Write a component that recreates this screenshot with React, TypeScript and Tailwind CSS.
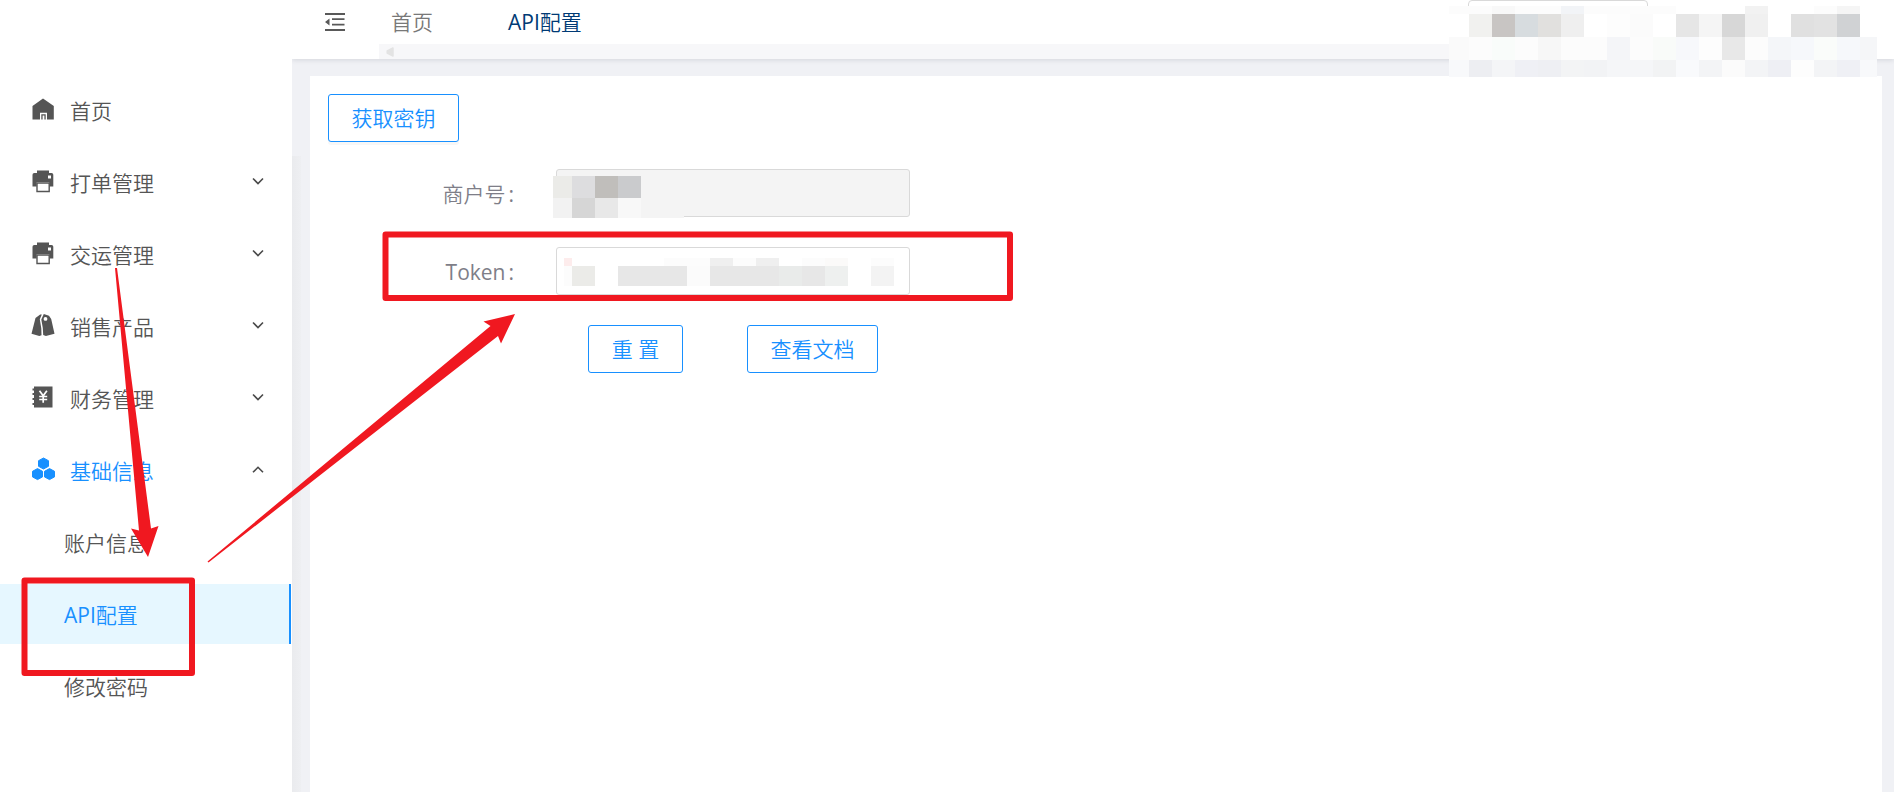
import React from "react";

const PrinterIcon = () => (
  <svg viewBox="0 0 24 24" className="h-6 w-6" fill="currentColor" aria-hidden="true">
    <path d="M6 1.500h12V4h2.500a1.800 1.800 0 0 1 1.800 1.800V17.500h-4V13H5.700v4.500H1.500V5.800A1.800 1.800 0 0 1 3.300 4H6zM17 6.500v3h3v-3z" fillRule="evenodd" />
    <path d="M6 14h12.200v8.500H6z" fill="#fff" stroke="currentColor" strokeWidth="1.400" />
  </svg>
);

const HomeIcon = () => (
  <svg viewBox="0 0 24 24" className="h-6 w-6" fill="currentColor" aria-hidden="true">
    <path d="M12 1.500 22.800 9v13.500h-6.800V15.700H9v6.800H1.500V9z" />
    <path d="M10.300 17.200h4.400v5.300h-1.300V18.500h-1.800v4h-1.300z" />
  </svg>
);

const TagsIcon = () => (
  <svg viewBox="0 0 24 24" className="h-6 w-6" fill="currentColor" aria-hidden="true">
    <path d="M9.200 1.500h1.600L8.800 6.300l1.500 9.200.2 6.800-2.200.7L.5 20.800 4.500 5z" />
    <path fillRule="evenodd" d="M12.800 1 18 2.800 20.200 6l3.300 14.800-8.600 2.200-2.700-.9-.4-7L10.300 6.500zM14.500 4a1.900 1.900 0 1 0 0 3.800 1.900 1.900 0 0 0 0-3.800z" />
  </svg>
);

const LedgerIcon = () => (
  <svg viewBox="0 0 24 24" className="h-6 w-6" aria-hidden="true">
    <path fill="currentColor" d="M3 1.500h18.500v21H3V20H1.500v-2H3v-3H1.500v-2H3v-3H1.500V8H3V5.500H1.500v-2H3z" />
    <path d="m8.500 5.800 3.700 5 3.700-5M12.200 10.800v7M8.200 11.500h8M8.200 14.500h8" fill="none" stroke="#fff" strokeWidth="1.700" />
  </svg>
);

const HexagonsIcon = () => (
  <svg viewBox="0 0 24 24" className="h-6 w-6" fill="currentColor" stroke="currentColor" strokeWidth="1" strokeLinejoin="round" aria-hidden="true">
    <path d="m12.500 1 5 2.700v5.600l-5 2.700-5-2.700V3.700z" />
    <path d="m6.500 11.600 5 2.700v5.600l-5 2.700-5-2.700v-5.600z" />
    <path d="m18.500 11.600 5 2.700v5.600l-5 2.700-5-2.700v-5.600z" />
  </svg>
);

const Chevron = ({ up = false }: { up?: boolean }) => (
  <svg viewBox="0 0 12 8" className="h-2 w-3" fill="none" stroke="#4a4a4a" strokeWidth="1.600" aria-hidden="true">
    <path d={up ? "M1 7.300 6 2.300l5 5" : "M1 1.500l5 5 5-5"} />
  </svg>
);

const menu = [
  { label: "首页", icon: <HomeIcon />, expandable: false },
  { label: "打单管理", icon: <PrinterIcon />, expandable: true },
  { label: "交运管理", icon: <PrinterIcon />, expandable: true },
  { label: "销售产品", icon: <TagsIcon />, expandable: true },
  { label: "财务管理", icon: <LedgerIcon />, expandable: true },
  { label: "基础信息", icon: <HexagonsIcon />, expandable: true, open: true },
];

const apiLabel = (
  <span>
    <span className="font-normal">API</span>配置
  </span>
);

const subMenu = [
  { key: "account", label: "账户信息" },
  { key: "api", label: apiLabel, active: true },
  { key: "password", label: "修改密码" },
];

type Block = [x: number, y: number, w: number, h: number, fill: string];

const accountRows: { y: number; h: number; fills: string[] }[] = [
  { y: 0, h: 8, fills: "fcfcfc fcfcfc f8f8f8 fcfcfc fcfcfc f2f4f7 fcfcfc fcfcfc fcfcfc fcfcfc ffffff ffffff ffffff f2f2f2 ffffff ffffff fcfcfc f5f5f5 ffffff".split(" ") },
  { y: 8, h: 23, fills: "ffffff f1f1ef c8c5c3 d7dcdf e1e0de efefef ffffff fdfdfd fbfbfb ffffff e6e6e6 f5f5f5 d7d7d7 f0f0f0 ffffff e0e0e0 e2e2e2 d0d2d4 ffffff".split(" ") },
  { y: 31, h: 23, fills: "fafafa fcfcfc f9fcfa fcfcfc f7f7f7 fcfcfc fcfcfc f4f5f8 fcfcfc f9fbf9 f7f8fb fdfdfd e8e8e8 fcfcfc f4f6f9 f6f8fb fafcfa f6f8fb f5f6f8".split(" ") },
  { y: 54, h: 17, fills: "f8f9fb edeef2 f4f5f7 eff0f5 eeeff3 f3f4f5 f2f3f5 f5f6f8 f5f6f8 f2f3f4 f9fafc f3f4f6 fbfbfb f3f4f6 eeeff4 fdfdfd f3f4f6 eff0f5 f8f9fb".split(" ") },
];

const accountBlocks: Block[] = accountRows.flatMap(({ y, h, fills }) =>
  fills.map((f, i): Block => [i === 0 ? 0 : 20 + (i - 1) * 23, y, i === 0 ? 20 : i === 18 ? 17 : 23, h, "#" + f]),
);

const merchantBlocks: Block[] = [
  [0, 0, 19, 22, "#ebebe8"],
  [19, 0, 23, 22, "#dddddf"],
  [42, 0, 23, 22, "#c0bebb"],
  [65, 0, 23, 22, "#cacbcd"],
  [0, 22, 19, 20, "#f2f2f2"],
  [19, 22, 23, 20, "#d6d6d6"],
  [42, 22, 23, 20, "#e8e8e8"],
  [65, 22, 23, 20, "#f8f8f8"],
  [88, 22, 43, 20, "#f4f4f4"],
];

const tokenBlocks: Block[] = [
  [0, 0, 8, 8, "#fdecec"],
  [100, 0, 46, 8, "#fcfcfc"],
  [146, 0, 23, 8, "#efefef"],
  [169, 0, 23, 8, "#fcfcfc"],
  [192, 0, 23, 8, "#efefef"],
  [238, 0, 23, 8, "#fcfcfc"],
  [261, 0, 23, 8, "#fbfaf9"],
  [307, 0, 23, 8, "#fcfcfc"],
  [0, 8, 8, 20, "#fcfcfc"],
  [8, 8, 23, 20, "#ebebe8"],
  [54, 8, 69, 20, "#e7e7e7"],
  [123, 8, 23, 20, "#fbfbfb"],
  [146, 8, 69, 20, "#e7e7e7"],
  [215, 8, 23, 20, "#e9ebea"],
  [238, 8, 23, 20, "#e7e7e7"],
  [261, 8, 23, 20, "#eef0ef"],
  [307, 8, 23, 20, "#f3f3f3"],
];

const Mosaic = ({ blocks, width, height, className }: { blocks: Block[]; width: number; height: number; className: string }) => (
  <svg width={width} height={height} shapeRendering="crispEdges" aria-hidden="true" className={`pointer-events-none absolute ${className}`}>
    {blocks.map(([x, y, w, h, fill], i) => (
      <rect key={i} x={x} y={y} width={w} height={h} fill={fill} />
    ))}
  </svg>
);

const outlineButton =
  "h-12 rounded-[3px] border border-[#1890ff] bg-white text-[#1890ff]";

function Sidebar() {
  return (
    <aside className="relative z-10 w-[292px] shrink-0 bg-white pt-20">
      <ul className="flex flex-col gap-3">
        {menu.map((item) => (
          <li key={item.label}>
            <button
              type="button"
              aria-expanded={item.expandable ? !!item.open : undefined}
              className={`flex h-[60px] w-full items-center pr-7 pb-0.5 pl-[31px] ${item.open ? "text-[#1890ff]" : "text-[#555555]"}`}
            >
              {item.icon}
              <span className="ml-[15px] flex-1 pt-1 text-left">{item.label}</span>
              {item.expandable && <Chevron up={item.open} />}
            </button>
          </li>
        ))}
        {subMenu.map((item) => (
          <li key={item.key} className="pr-px">
            <a
              href="#"
              className={`flex h-[60px] items-center pt-0.5 pl-16 ${item.active ? "border-r-2 border-[#1890ff] bg-[#e6f7ff] text-[#1890ff]" : "text-[#555555]"}`}
            >
              {item.label}
            </a>
          </li>
        ))}
      </ul>
    </aside>
  );
}

function Header() {
  return (
    <header className="relative flex h-[59px] bg-white shadow-[0_1px_5px_rgba(0,21,41,0.12)]">
      <button type="button" aria-label="收起菜单" className="h-11 w-[87px] shrink-0 pl-[33px] text-[#595959]">
        <svg viewBox="0 0 20 18" className="h-[18px] w-5" fill="currentColor" aria-hidden="true">
          <path d="M0 0h20v2H0zM7 5.300h12.500v1.700H7zM7 10.800h12.500v1.700H7zM0 16h20v2H0zM4.500 5.500v7L0 9z" />
        </svg>
      </button>
      <nav className="flex min-w-0 flex-1 flex-col">
        <div className="flex h-11 items-center gap-[75px] pl-3">
          <a href="#" className="text-[#787878]">首页</a>
          <a href="#" className="text-[#003a75]">{apiLabel}</a>
        </div>
        <div className="flex h-[15px] items-center bg-[#f7f7f9] pl-[7px]">
          <svg viewBox="0 0 8 10" className="h-[10px] w-2" aria-hidden="true">
            <path d="M7 1v8L1.200 6V4z" fill="#e3e3e3" stroke="#e3e3e3" strokeWidth="1.500" strokeLinejoin="round" />
          </svg>
        </div>
      </nav>
      <div className="w-[445px] shrink-0 pl-[19px]">
        <select aria-label="账户" className="block h-8 w-[180px] appearance-none rounded border border-[#d9d9d9] bg-white" />
      </div>
      <Mosaic blocks={accountBlocks} width={428} height={71} className="top-[6px] right-[17px]" />
    </header>
  );
}

function FieldLabel({ htmlFor, children }: { htmlFor: string; children: React.ReactNode }) {
  return (
    <label htmlFor={htmlFor} className="flex w-[186px] justify-end gap-[3px] pt-0.5 text-[#7e7e88]">
      <span>{children}</span>
      <span className="font-normal">:</span>
    </label>
  );
}

function Annotations() {
  return (
    <svg className="pointer-events-none absolute top-0 left-0 z-20 h-[792px] w-[1100px]" aria-hidden="true">
      <g fill="none" stroke="#f01820" strokeWidth="6" strokeLinejoin="round">
        <rect x="24.500" y="580.500" width="167.500" height="92.500" />
        <rect x="385.500" y="234.500" width="624.500" height="63.500" />
      </g>
      <g fill="#f01820">
        <path d="M115 268h2l34 260.500 7.500-2.500-10.500 31-17-28.500 8 2z" />
        <path d="M207.500 561.500 490.500 326l-7-4.500 31.500-7.500-14 29.500-3-7.500L208.500 562.500z" />
      </g>
    </svg>
  );
}

export default function App() {
  return (
    <div className="relative flex min-h-screen overflow-hidden bg-[#f0f1f5] font-['Open_Sans','Noto_Sans_CJK_SC',sans-serif] text-[21px] leading-7 font-[350]">
      <Sidebar />
      <div className="relative flex min-w-0 flex-1 flex-col">
        <div className="absolute top-[156px] bottom-0 left-0 w-[9px] bg-linear-to-r from-[#eaebee] to-[#eeeff2]" />
        <Header />
        <main className="mt-[17px] mr-3 ml-[18px] flex-1 bg-white px-[18px] pt-[18px]">
          <button type="button" className={`${outlineButton} w-[131px] shadow-[0_3px_0_rgba(0,0,0,0.03)]`}>获取密钥</button>
          <form className="mt-[27px]" onSubmit={(e) => e.preventDefault()}>
            <div className="flex items-center gap-[42px]">
              <FieldLabel htmlFor="merchant">商户号</FieldLabel>
              <div className="relative w-[354px]">
                <input id="merchant" disabled className="block h-12 w-full rounded-[3px] border border-[#d9d9d9] bg-[#f4f4f4] px-3" />
                <Mosaic blocks={merchantBlocks} width={131} height={42} className="top-[7px] -left-[3px]" />
              </div>
            </div>
            <div className="mt-[30px] flex items-center gap-[42px]">
              <FieldLabel htmlFor="token">
                <span className="font-normal">Token</span>
              </FieldLabel>
              <div className="relative w-[354px]">
                <input id="token" className="block h-12 w-full rounded-[3px] border border-[#d9d9d9] bg-white px-3" />
                <Mosaic blocks={tokenBlocks} width={330} height={28} className="top-[11px] left-2" />
              </div>
            </div>
            <div className="mt-[30px] ml-[260px] flex gap-16">
              <button type="reset" className={`${outlineButton} w-[95px]`}>重 置</button>
              <button type="button" className={`${outlineButton} w-[131px]`}>查看文档</button>
            </div>
          </form>
        </main>
      </div>
      <Annotations />
    </div>
  );
}
